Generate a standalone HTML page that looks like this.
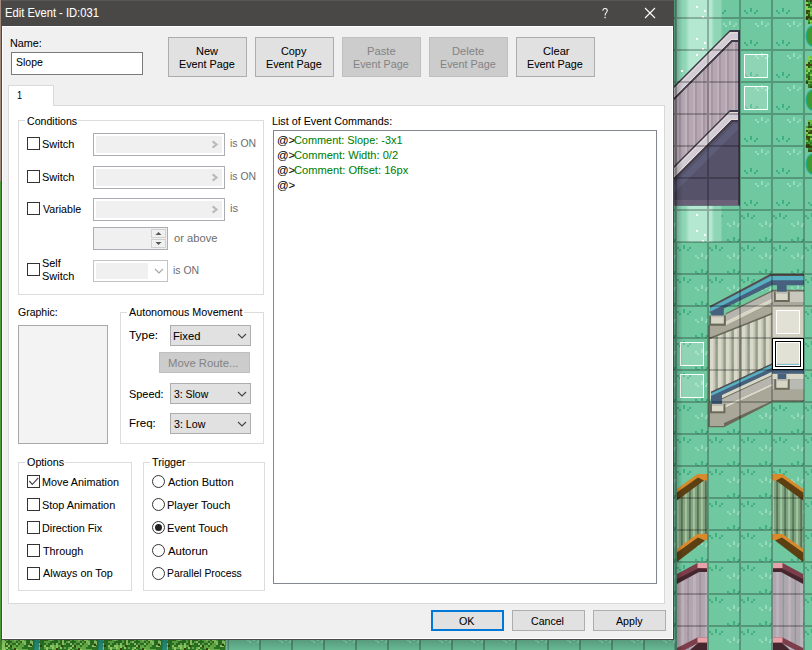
<!DOCTYPE html>
<html><head><meta charset="utf-8"><title>Edit Event</title>
<style>
html,body{margin:0;padding:0}
body{width:812px;height:650px;overflow:hidden;position:relative;background:#70c8a0;font-family:"Liberation Sans",sans-serif;}
.a{position:absolute;box-sizing:border-box}
.t{position:absolute;white-space:pre;line-height:14px;transform-origin:0 0;-webkit-text-stroke:0.05px currentColor}
.btn{background:#e1e1e1;border:1px solid #adadad}
.btd{background:#cccccc;border:1px solid #bfbfbf}
.grp{border:1px solid #dcdcdc}
.fld{background:#f0f0f0;border:1px solid #abadb3}
.fw{box-shadow:inset 0 0 0 2px #fff}
.ns{-webkit-text-stroke:0 !important}
.cb{width:13px;height:13px;background:#fff;border:1px solid #333}
.rb{width:13px;height:13px;background:#fff;border:1px solid #333;border-radius:50%}
.cmb{background:#e1e1e1;border:1px solid #adadad}
.gl{background:#fff;height:14px}
</style></head>
<body>
<svg class="a" style="left:0;top:0" width="812" height="650" viewBox="0 0 812 650"><defs><pattern id="fl" x="4" y="18" width="32" height="32" patternUnits="userSpaceOnUse"><rect x="0" y="0" width="32" height="32" fill="#70c8a0" /><rect x="1" y="5" width="2" height="2" fill="#3fae80" /><rect x="3" y="7" width="2" height="2" fill="#3fae80" /><rect x="7" y="3" width="2" height="2" fill="#3fae80" /><rect x="7" y="5" width="2" height="2" fill="#3fae80" /><rect x="11" y="7" width="2" height="2" fill="#3fae80" /><rect x="13" y="5" width="2" height="2" fill="#3fae80" /><rect x="19" y="13" width="2" height="2" fill="#98dcc0" /><rect x="21" y="15" width="2" height="2" fill="#98dcc0" /><rect x="25" y="11" width="2" height="2" fill="#98dcc0" /><rect x="25" y="13" width="2" height="2" fill="#98dcc0" /><rect x="29" y="15" width="2" height="2" fill="#98dcc0" /><rect x="30" y="13" width="2" height="2" fill="#98dcc0" /><rect x="19" y="29" width="2" height="2" fill="#3fae80" /><rect x="21" y="31" width="2" height="2" fill="#3fae80" /><rect x="25" y="27" width="2" height="2" fill="#3fae80" /><rect x="25" y="29" width="2" height="2" fill="#3fae80" /><rect x="29" y="31" width="2" height="2" fill="#3fae80" /><rect x="30" y="29" width="2" height="2" fill="#3fae80" /></pattern><pattern id="fa" x="4" y="18" width="32" height="32" patternUnits="userSpaceOnUse"><rect x="0" y="0" width="32" height="32" fill="#70c8a0" /><rect x="15" y="5" width="2" height="2" fill="#98dcc0" /><rect x="17" y="7" width="2" height="2" fill="#98dcc0" /><rect x="21" y="3" width="2" height="2" fill="#98dcc0" /><rect x="21" y="5" width="2" height="2" fill="#98dcc0" /><rect x="25" y="7" width="2" height="2" fill="#98dcc0" /><rect x="27" y="5" width="2" height="2" fill="#98dcc0" /><rect x="4" y="24" width="2" height="2" fill="#3fae80" /><rect x="6" y="26" width="2" height="2" fill="#3fae80" /><rect x="10" y="22" width="2" height="2" fill="#3fae80" /><rect x="10" y="24" width="2" height="2" fill="#3fae80" /><rect x="14" y="26" width="2" height="2" fill="#3fae80" /><rect x="16" y="24" width="2" height="2" fill="#3fae80" /></pattern><pattern id="gr" x="4" y="18" width="32" height="32" patternUnits="userSpaceOnUse"><rect x="0" y="0" width="0.9" height="32" fill="#000" /><rect x="31.1" y="0" width="0.9" height="32" fill="#000" /><rect x="0.9" y="0" width="30.2" height="0.9" fill="#000" /><rect x="0.9" y="31.1" width="30.2" height="0.9" fill="#000" /></pattern><linearGradient id="sh" x1="0" x2="1" y1="0" y2="0"><stop offset="0" stop-color="#000" stop-opacity="0.28"/><stop offset="1" stop-color="#000" stop-opacity="0"/></linearGradient><linearGradient id="lb" x1="0" x2="1" y1="0" y2="0"><stop offset="0" stop-color="#8fd8b8"/><stop offset="0.25" stop-color="#b4ead2"/><stop offset="0.55" stop-color="#bdeed8"/><stop offset="0.75" stop-color="#a6e2c6"/><stop offset="1" stop-color="#84d2b0"/></linearGradient><pattern id="bu" x="0" y="639" width="64" height="12" patternUnits="userSpaceOnUse"><rect x="0" y="0" width="64" height="12" fill="#4c9f38" /><rect x="0" y="0" width="2" height="2" fill="#2f8028" /><rect x="0" y="2" width="2" height="2" fill="#2f8028" /><rect x="0" y="4" width="2" height="2" fill="#6cbc4c" /><rect x="0" y="6" width="2" height="2" fill="#2f8028" /><rect x="0" y="8" width="2" height="2" fill="#6cbc4c" /><rect x="0" y="10" width="2" height="2" fill="#2f8028" /><rect x="2" y="0" width="2" height="2" fill="#2f8028" /><rect x="2" y="2" width="2" height="2" fill="#6cbc4c" /><rect x="2" y="4" width="2" height="2" fill="#2f8028" /><rect x="2" y="6" width="2" height="2" fill="#2f8028" /><rect x="2" y="8" width="2" height="2" fill="#2f8028" /><rect x="2" y="10" width="2" height="2" fill="#2f8028" /><rect x="4" y="0" width="2" height="2" fill="#2f8028" /><rect x="4" y="2" width="2" height="2" fill="#a0e070" /><rect x="4" y="4" width="2" height="2" fill="#2f8028" /><rect x="4" y="6" width="2" height="2" fill="#2f8028" /><rect x="4" y="8" width="2" height="2" fill="#6cbc4c" /><rect x="4" y="10" width="2" height="2" fill="#a0e070" /><rect x="6" y="0" width="2" height="2" fill="#6cbc4c" /><rect x="6" y="2" width="2" height="2" fill="#2f8028" /><rect x="6" y="4" width="2" height="2" fill="#a0e070" /><rect x="6" y="6" width="2" height="2" fill="#2f8028" /><rect x="6" y="8" width="2" height="2" fill="#a0e070" /><rect x="6" y="10" width="2" height="2" fill="#2f8028" /><rect x="8" y="0" width="2" height="2" fill="#2f8028" /><rect x="8" y="2" width="2" height="2" fill="#2f8028" /><rect x="8" y="4" width="2" height="2" fill="#2f8028" /><rect x="8" y="6" width="2" height="2" fill="#a0e070" /><rect x="8" y="8" width="2" height="2" fill="#2f8028" /><rect x="8" y="10" width="2" height="2" fill="#6cbc4c" /><rect x="10" y="0" width="2" height="2" fill="#6cbc4c" /><rect x="10" y="2" width="2" height="2" fill="#2f8028" /><rect x="10" y="4" width="2" height="2" fill="#6cbc4c" /><rect x="10" y="6" width="2" height="2" fill="#2f8028" /><rect x="10" y="8" width="2" height="2" fill="#2f8028" /><rect x="10" y="10" width="2" height="2" fill="#2f8028" /><rect x="12" y="0" width="2" height="2" fill="#6cbc4c" /><rect x="12" y="2" width="2" height="2" fill="#6cbc4c" /><rect x="12" y="4" width="2" height="2" fill="#2f8028" /><rect x="12" y="6" width="2" height="2" fill="#6cbc4c" /><rect x="12" y="8" width="2" height="2" fill="#6cbc4c" /><rect x="12" y="10" width="2" height="2" fill="#2f8028" /><rect x="14" y="0" width="2" height="2" fill="#a0e070" /><rect x="14" y="2" width="2" height="2" fill="#6cbc4c" /><rect x="14" y="4" width="2" height="2" fill="#2f8028" /><rect x="14" y="6" width="2" height="2" fill="#6cbc4c" /><rect x="14" y="8" width="2" height="2" fill="#6cbc4c" /><rect x="14" y="10" width="2" height="2" fill="#a0e070" /><rect x="16" y="0" width="2" height="2" fill="#6cbc4c" /><rect x="16" y="2" width="2" height="2" fill="#2f8028" /><rect x="16" y="4" width="2" height="2" fill="#a0e070" /><rect x="16" y="6" width="2" height="2" fill="#2f8028" /><rect x="16" y="8" width="2" height="2" fill="#6cbc4c" /><rect x="16" y="10" width="2" height="2" fill="#a0e070" /><rect x="18" y="0" width="2" height="2" fill="#2f8028" /><rect x="18" y="2" width="2" height="2" fill="#6cbc4c" /><rect x="18" y="4" width="2" height="2" fill="#2f8028" /><rect x="18" y="6" width="2" height="2" fill="#6cbc4c" /><rect x="18" y="8" width="2" height="2" fill="#6cbc4c" /><rect x="18" y="10" width="2" height="2" fill="#6cbc4c" /><rect x="20" y="0" width="2" height="2" fill="#a0e070" /><rect x="20" y="2" width="2" height="2" fill="#2f8028" /><rect x="20" y="4" width="2" height="2" fill="#6cbc4c" /><rect x="20" y="6" width="2" height="2" fill="#6cbc4c" /><rect x="20" y="8" width="2" height="2" fill="#6cbc4c" /><rect x="20" y="10" width="2" height="2" fill="#6cbc4c" /><rect x="22" y="0" width="2" height="2" fill="#a0e070" /><rect x="22" y="2" width="2" height="2" fill="#a0e070" /><rect x="22" y="4" width="2" height="2" fill="#6cbc4c" /><rect x="22" y="6" width="2" height="2" fill="#6cbc4c" /><rect x="22" y="8" width="2" height="2" fill="#2f8028" /><rect x="22" y="10" width="2" height="2" fill="#6cbc4c" /><rect x="24" y="0" width="2" height="2" fill="#6cbc4c" /><rect x="24" y="2" width="2" height="2" fill="#a0e070" /><rect x="24" y="4" width="2" height="2" fill="#a0e070" /><rect x="24" y="6" width="2" height="2" fill="#2f8028" /><rect x="24" y="8" width="2" height="2" fill="#2f8028" /><rect x="24" y="10" width="2" height="2" fill="#6cbc4c" /><rect x="26" y="0" width="2" height="2" fill="#2f8028" /><rect x="26" y="2" width="2" height="2" fill="#2f8028" /><rect x="26" y="4" width="2" height="2" fill="#2f8028" /><rect x="26" y="6" width="2" height="2" fill="#2f8028" /><rect x="26" y="8" width="2" height="2" fill="#2f8028" /><rect x="26" y="10" width="2" height="2" fill="#6cbc4c" /><rect x="28" y="0" width="2" height="2" fill="#2f8028" /><rect x="28" y="2" width="2" height="2" fill="#2f8028" /><rect x="28" y="4" width="2" height="2" fill="#2f8028" /><rect x="28" y="6" width="2" height="2" fill="#a0e070" /><rect x="28" y="8" width="2" height="2" fill="#2f8028" /><rect x="28" y="10" width="2" height="2" fill="#2f8028" /><rect x="30" y="0" width="2" height="2" fill="#6cbc4c" /><rect x="30" y="2" width="2" height="2" fill="#a0e070" /><rect x="30" y="4" width="2" height="2" fill="#6cbc4c" /><rect x="30" y="6" width="2" height="2" fill="#a0e070" /><rect x="30" y="8" width="2" height="2" fill="#2f8028" /><rect x="30" y="10" width="2" height="2" fill="#2f8028" /><rect x="32" y="0" width="2" height="2" fill="#2f8028" /><rect x="32" y="2" width="2" height="2" fill="#a0e070" /><rect x="32" y="4" width="2" height="2" fill="#a0e070" /><rect x="32" y="6" width="2" height="2" fill="#2f8028" /><rect x="32" y="8" width="2" height="2" fill="#2f8028" /><rect x="32" y="10" width="2" height="2" fill="#2f8028" /><rect x="34" y="0" width="2" height="2" fill="#2f8028" /><rect x="34" y="2" width="2" height="2" fill="#2f8028" /><rect x="34" y="4" width="2" height="2" fill="#6cbc4c" /><rect x="34" y="6" width="2" height="2" fill="#2f8028" /><rect x="34" y="8" width="2" height="2" fill="#2f8028" /><rect x="34" y="10" width="2" height="2" fill="#2f8028" /><rect x="36" y="0" width="2" height="2" fill="#2f8028" /><rect x="36" y="2" width="2" height="2" fill="#6cbc4c" /><rect x="36" y="4" width="2" height="2" fill="#a0e070" /><rect x="36" y="6" width="2" height="2" fill="#6cbc4c" /><rect x="36" y="8" width="2" height="2" fill="#6cbc4c" /><rect x="36" y="10" width="2" height="2" fill="#6cbc4c" /><rect x="38" y="0" width="2" height="2" fill="#6cbc4c" /><rect x="38" y="2" width="2" height="2" fill="#2f8028" /><rect x="38" y="4" width="2" height="2" fill="#a0e070" /><rect x="38" y="6" width="2" height="2" fill="#6cbc4c" /><rect x="38" y="8" width="2" height="2" fill="#a0e070" /><rect x="38" y="10" width="2" height="2" fill="#6cbc4c" /><rect x="40" y="0" width="2" height="2" fill="#2f8028" /><rect x="40" y="2" width="2" height="2" fill="#2f8028" /><rect x="40" y="4" width="2" height="2" fill="#2f8028" /><rect x="40" y="6" width="2" height="2" fill="#6cbc4c" /><rect x="40" y="8" width="2" height="2" fill="#2f8028" /><rect x="40" y="10" width="2" height="2" fill="#2f8028" /><rect x="42" y="0" width="2" height="2" fill="#2f8028" /><rect x="42" y="2" width="2" height="2" fill="#2f8028" /><rect x="42" y="4" width="2" height="2" fill="#2f8028" /><rect x="42" y="6" width="2" height="2" fill="#2f8028" /><rect x="42" y="8" width="2" height="2" fill="#2f8028" /><rect x="42" y="10" width="2" height="2" fill="#2f8028" /><rect x="44" y="0" width="2" height="2" fill="#2f8028" /><rect x="44" y="2" width="2" height="2" fill="#6cbc4c" /><rect x="44" y="4" width="2" height="2" fill="#2f8028" /><rect x="44" y="6" width="2" height="2" fill="#a0e070" /><rect x="44" y="8" width="2" height="2" fill="#6cbc4c" /><rect x="44" y="10" width="2" height="2" fill="#2f8028" /><rect x="46" y="0" width="2" height="2" fill="#2f8028" /><rect x="46" y="2" width="2" height="2" fill="#6cbc4c" /><rect x="46" y="4" width="2" height="2" fill="#6cbc4c" /><rect x="46" y="6" width="2" height="2" fill="#2f8028" /><rect x="46" y="8" width="2" height="2" fill="#a0e070" /><rect x="46" y="10" width="2" height="2" fill="#a0e070" /><rect x="48" y="0" width="2" height="2" fill="#6cbc4c" /><rect x="48" y="2" width="2" height="2" fill="#6cbc4c" /><rect x="48" y="4" width="2" height="2" fill="#2f8028" /><rect x="48" y="6" width="2" height="2" fill="#2f8028" /><rect x="48" y="8" width="2" height="2" fill="#6cbc4c" /><rect x="48" y="10" width="2" height="2" fill="#2f8028" /><rect x="50" y="0" width="2" height="2" fill="#a0e070" /><rect x="50" y="2" width="2" height="2" fill="#2f8028" /><rect x="50" y="4" width="2" height="2" fill="#2f8028" /><rect x="50" y="6" width="2" height="2" fill="#a0e070" /><rect x="50" y="8" width="2" height="2" fill="#6cbc4c" /><rect x="50" y="10" width="2" height="2" fill="#2f8028" /><rect x="52" y="0" width="2" height="2" fill="#6cbc4c" /><rect x="52" y="2" width="2" height="2" fill="#2f8028" /><rect x="52" y="4" width="2" height="2" fill="#6cbc4c" /><rect x="52" y="6" width="2" height="2" fill="#a0e070" /><rect x="52" y="8" width="2" height="2" fill="#a0e070" /><rect x="52" y="10" width="2" height="2" fill="#6cbc4c" /><rect x="54" y="0" width="2" height="2" fill="#2f8028" /><rect x="54" y="2" width="2" height="2" fill="#2f8028" /><rect x="54" y="4" width="2" height="2" fill="#2f8028" /><rect x="54" y="6" width="2" height="2" fill="#6cbc4c" /><rect x="54" y="8" width="2" height="2" fill="#6cbc4c" /><rect x="54" y="10" width="2" height="2" fill="#6cbc4c" /><rect x="56" y="0" width="2" height="2" fill="#2f8028" /><rect x="56" y="2" width="2" height="2" fill="#2f8028" /><rect x="56" y="4" width="2" height="2" fill="#a0e070" /><rect x="56" y="6" width="2" height="2" fill="#a0e070" /><rect x="56" y="8" width="2" height="2" fill="#a0e070" /><rect x="56" y="10" width="2" height="2" fill="#6cbc4c" /><rect x="58" y="0" width="2" height="2" fill="#6cbc4c" /><rect x="58" y="2" width="2" height="2" fill="#6cbc4c" /><rect x="58" y="4" width="2" height="2" fill="#2f8028" /><rect x="58" y="6" width="2" height="2" fill="#6cbc4c" /><rect x="58" y="8" width="2" height="2" fill="#2f8028" /><rect x="58" y="10" width="2" height="2" fill="#2f8028" /><rect x="60" y="0" width="2" height="2" fill="#2f8028" /><rect x="60" y="2" width="2" height="2" fill="#2f8028" /><rect x="60" y="4" width="2" height="2" fill="#2f8028" /><rect x="60" y="6" width="2" height="2" fill="#6cbc4c" /><rect x="60" y="8" width="2" height="2" fill="#a0e070" /><rect x="60" y="10" width="2" height="2" fill="#2f8028" /><rect x="62" y="0" width="2" height="2" fill="#a0e070" /><rect x="62" y="2" width="2" height="2" fill="#a0e070" /><rect x="62" y="4" width="2" height="2" fill="#a0e070" /><rect x="62" y="6" width="2" height="2" fill="#2f8028" /><rect x="62" y="8" width="2" height="2" fill="#2f8028" /><rect x="62" y="10" width="2" height="2" fill="#2f8028" /><rect x="34" y="0" width="5" height="12" fill="#2a9a80" /><rect x="33" y="0" width="1.5" height="12" fill="#1f7a66" /><rect x="10" y="6" width="2" height="2" fill="#3a4a12" /><rect x="30" y="5" width="2" height="2" fill="#3a4a12" /><rect x="40" y="6" width="2" height="2" fill="#3a4a12" /><rect x="61" y="6" width="2" height="2" fill="#3a4a12" /><rect x="14" y="9" width="2" height="2" fill="#3a4a12" /><rect x="56" y="9" width="2" height="2" fill="#3a4a12" /></pattern><linearGradient id="sv" x1="0" x2="0" y1="0" y2="1"><stop offset="0" stop-color="#000" stop-opacity="0.22"/><stop offset="1" stop-color="#000" stop-opacity="0.08"/></linearGradient></defs><rect x="0" y="0" width="812" height="650" fill="url(#fl)" /><rect x="674" y="0" width="138" height="210" fill="url(#fa)" /><rect x="676" y="0" width="45.5" height="120" fill="#8ed6b6" /><rect x="686.5" y="0" width="27" height="120" fill="#a2dfc4" /><rect x="688.5" y="0" width="23.5" height="120" fill="#b4e8d0" /><rect x="676" y="206" width="45.5" height="36" fill="#8ed6b6" /><rect x="686.5" y="206" width="27" height="36" fill="#a2dfc4" /><rect x="688.5" y="206" width="23.5" height="36" fill="#b4e8d0" /><rect x="696" y="6" width="2" height="2" fill="#fff" /><rect x="704" y="10" width="2" height="2" fill="#fff" /><rect x="702" y="16" width="2" height="2" fill="#fff" /><rect x="696" y="38" width="2" height="2" fill="#fff" /><rect x="704" y="42" width="2" height="2" fill="#fff" /><rect x="702" y="48" width="2" height="2" fill="#fff" /><rect x="696" y="54" width="2" height="2" fill="#fff" /><rect x="681" y="70" width="2" height="2" fill="#fff" /><rect x="696" y="230" width="2" height="2" fill="#fff" /><rect x="704" y="234" width="2" height="2" fill="#fff" /><rect x="702" y="240" width="2" height="2" fill="#fff" /><rect x="696" y="214" width="2" height="2" fill="#fff" /><clipPath id="c1"><polygon points="674.0,97.0 730.4,40.0 738.5,40.0 738.5,112.0 728.5,112.0 674.0,168.0" fill="#000" /></clipPath><g clip-path="url(#c1)"><rect x="673" y="38" width="4.05" height="132" fill="#b5a6b2" /><rect x="677" y="38" width="2.05" height="132" fill="#bfb2bc" /><rect x="679" y="38" width="2.05" height="132" fill="#a797a5" /><rect x="681" y="38" width="4.05" height="132" fill="#b5a6b2" /><rect x="685" y="38" width="2.05" height="132" fill="#bfb2bc" /><rect x="687" y="38" width="2.05" height="132" fill="#a797a5" /><rect x="689" y="38" width="4.05" height="132" fill="#b5a6b2" /><rect x="693" y="38" width="2.05" height="132" fill="#bfb2bc" /><rect x="695" y="38" width="2.05" height="132" fill="#a797a5" /><rect x="697" y="38" width="4.05" height="132" fill="#b5a6b2" /><rect x="701" y="38" width="2.05" height="132" fill="#bfb2bc" /><rect x="703" y="38" width="2.05" height="132" fill="#a797a5" /><rect x="705" y="38" width="4.05" height="132" fill="#b5a6b2" /><rect x="709" y="38" width="2.05" height="132" fill="#bfb2bc" /><rect x="711" y="38" width="2.05" height="132" fill="#a797a5" /><rect x="713" y="38" width="4.05" height="132" fill="#b5a6b2" /><rect x="717" y="38" width="2.05" height="132" fill="#bfb2bc" /><rect x="719" y="38" width="2.05" height="132" fill="#a797a5" /><rect x="721" y="38" width="4.05" height="132" fill="#b5a6b2" /><rect x="725" y="38" width="2.05" height="132" fill="#bfb2bc" /><rect x="727" y="38" width="2.05" height="132" fill="#a797a5" /><rect x="729" y="38" width="4.05" height="132" fill="#b5a6b2" /><rect x="733" y="38" width="2.05" height="132" fill="#bfb2bc" /><rect x="735" y="38" width="2.05" height="132" fill="#a797a5" /><rect x="737" y="38" width="2.05" height="132" fill="#b5a6b2" /></g><polygon points="674.0,178.0 732.0,120.0 738.5,120.0 738.5,205.5 674.0,205.5" fill="#555269" /><polygon points="674.0,184.0 734.0,124.0 738.2,124.0 738.2,129.0 674.0,193.0" fill="#5d5d7a" /><rect x="674" y="200" width="65" height="5.5" fill="#6a6078" /><polygon points="674.0,86.0 729.9,30.1 739.9,30.1 739.9,42.0 732.3,42.0 674.0,100.3" fill="#3f394c" /><polygon points="674.0,88.2 730.1,32.1 738.2,32.1 738.2,40.1 731.3,40.1 674.0,97.4" fill="#d2ccd8" /><polygon points="674.0,88.2 730.1,32.1 738.2,32.1 738.2,33.3 730.6,33.3 674.0,89.9" fill="#e6dcd0" /><polygon points="674.0,95.9 730.8,39.1 738.2,39.1 738.2,40.1 731.3,40.1 674.0,97.4" fill="#e6dcd0" /><polygon points="674.0,166.0 729.9,110.1 739.9,110.1 739.9,122.0 732.3,122.0 674.0,180.3" fill="#3f394c" /><polygon points="674.0,168.2 730.1,112.1 738.2,112.1 738.2,120.1 731.3,120.1 674.0,177.4" fill="#d2ccd8" /><polygon points="674.0,168.2 730.1,112.1 738.2,112.1 738.2,113.3 730.6,113.3 674.0,169.9" fill="#e6dcd0" /><polygon points="674.0,175.9 730.8,119.1 738.2,119.1 738.2,120.1 731.3,120.1 674.0,177.4" fill="#e6dcd0" /><rect x="738" y="31" width="2" height="174.5" fill="#3f394c" /><clipPath id="c2"><polygon points="708.7,338.0 772.0,313.0 772.0,372.0 708.7,400.0" fill="#000" /></clipPath><g clip-path="url(#c2)"><rect x="708.7" y="310" width="1.05" height="92" fill="#7f7e6e" /><rect x="709.7" y="310" width="4.05" height="92" fill="#dad9c9" /><rect x="713.7" y="310" width="1.65" height="92" fill="#c6c5b5" /><rect x="715.3" y="310" width="1.45" height="92" fill="#aaa999" /><rect x="716.7" y="310" width="1.05" height="92" fill="#7f7e6e" /><rect x="717.7" y="310" width="4.05" height="92" fill="#dad9c9" /><rect x="721.7" y="310" width="1.65" height="92" fill="#c6c5b5" /><rect x="723.3" y="310" width="1.45" height="92" fill="#aaa999" /><rect x="724.7" y="310" width="1.05" height="92" fill="#7f7e6e" /><rect x="725.7" y="310" width="4.05" height="92" fill="#dad9c9" /><rect x="729.7" y="310" width="1.65" height="92" fill="#c6c5b5" /><rect x="731.3" y="310" width="1.45" height="92" fill="#aaa999" /><rect x="732.7" y="310" width="1.05" height="92" fill="#7f7e6e" /><rect x="733.7" y="310" width="4.05" height="92" fill="#dad9c9" /><rect x="737.7" y="310" width="1.65" height="92" fill="#c6c5b5" /><rect x="739.3" y="310" width="1.45" height="92" fill="#aaa999" /><rect x="740.7" y="310" width="1.05" height="92" fill="#7f7e6e" /><rect x="741.7" y="310" width="4.05" height="92" fill="#dad9c9" /><rect x="745.7" y="310" width="1.65" height="92" fill="#c6c5b5" /><rect x="747.3" y="310" width="1.45" height="92" fill="#aaa999" /><rect x="748.7" y="310" width="1.05" height="92" fill="#7f7e6e" /><rect x="749.7" y="310" width="4.05" height="92" fill="#dad9c9" /><rect x="753.7" y="310" width="1.65" height="92" fill="#c6c5b5" /><rect x="755.3" y="310" width="1.45" height="92" fill="#aaa999" /><rect x="756.7" y="310" width="1.05" height="92" fill="#7f7e6e" /><rect x="757.7" y="310" width="4.05" height="92" fill="#dad9c9" /><rect x="761.7" y="310" width="1.65" height="92" fill="#c6c5b5" /><rect x="763.3" y="310" width="1.45" height="92" fill="#aaa999" /><rect x="764.7" y="310" width="1.05" height="92" fill="#7f7e6e" /><rect x="765.7" y="310" width="4.05" height="92" fill="#dad9c9" /><rect x="769.7" y="310" width="1.65" height="92" fill="#c6c5b5" /><rect x="771.3" y="310" width="0.75" height="92" fill="#aaa999" /></g><polygon points="709.1,325.0 725.8,325.0 725.8,313.2 772.0,290.4 772.0,314.6 709.1,339.6" fill="#6b6a5a" /><polygon points="709.1,325.6 725.8,325.6 725.8,325.4 772.0,302.6 772.0,312.8 709.1,337.8" fill="#a9a898" /><polygon points="725.8,314.5 772.0,291.7 772.0,298.1 725.8,320.9" fill="#b6b6ae" /><polygon points="725.8,320.9 772.0,298.1 772.0,302.6 725.8,325.4" fill="#d8d7c7" /><polygon points="708.7,404.0 724.0,396.0 772.0,373.5 772.0,402.6 724.0,427.3 708.7,427.3" fill="#6b6a5a" /><polygon points="722.0,394.7 772.0,371.6 772.0,375.1 722.0,398.2" fill="#d8d7c7" /><polygon points="722.0,399.2 772.0,376.1 772.0,383.5 722.0,406.6" fill="#b6b6ae" /><polygon points="722.0,406.6 772.0,383.5 772.0,386.3 722.0,409.4" fill="#d8d7c7" /><polygon points="722.0,409.4 772.0,386.3 772.0,400.9 722.0,424.0" fill="#a9a898" /><rect x="710" y="413" width="14" height="13" fill="#a9a898" /><rect x="708.4" y="325" width="1.6" height="102" fill="#6b6a5a" /><rect x="772" y="289.8" width="32" height="48.5" fill="#6b6a5a" /><rect x="772" y="291.5" width="32" height="10.5" fill="#c8c8bc" /><rect x="772" y="302" width="32" height="4" fill="#a9a99d" /><rect x="772" y="306" width="32" height="32.5" fill="#d0cfc0" /><rect x="777" y="311" width="22" height="22" fill="#dad9ca" /><rect x="772" y="338" width="32" height="63.6" fill="#6b6a5a" /><rect x="772" y="338" width="32" height="32" fill="#d0cfc0" /><rect x="777" y="343" width="22" height="20" fill="#dad9ca" /><rect x="777" y="364" width="22" height="1.6" fill="#56b0c1" /><rect x="772" y="369.8" width="32" height="4" fill="#46607e" /><rect x="772" y="373.8" width="32" height="5.3" fill="#d8d7c7" /><rect x="772" y="379.1" width="32" height="10.7" fill="#babab4" /><rect x="772" y="389.8" width="32" height="10.4" fill="#a9a898" /><rect x="773.8" y="291.7" width="16" height="10.3" fill="#6b6a5a" /><rect x="775.8" y="291.7" width="12" height="8.3" fill="#d8d7c7" /><rect x="775.8" y="291.7" width="12" height="2" fill="#bdbcae" /><rect x="709.1" y="315.4" width="16.7" height="10.2" fill="#6b6a5a" /><rect x="711.1" y="315.4" width="12.7" height="8.2" fill="#d8d7c7" /><rect x="711.1" y="315.4" width="12.7" height="2" fill="#bdbcae" /><rect x="774.3" y="379.1" width="15.4" height="10.7" fill="#6b6a5a" /><rect x="776.3" y="379.1" width="11.4" height="8.7" fill="#d8d7c7" /><rect x="776.3" y="379.1" width="11.4" height="2" fill="#bdbcae" /><rect x="710" y="403.9" width="15.4" height="9.4" fill="#6b6a5a" /><rect x="712" y="403.9" width="11.4" height="7.4" fill="#d8d7c7" /><rect x="712" y="403.9" width="11.4" height="2" fill="#bdbcae" /><polygon points="710.4,305.7 770.6,276.0 804.0,273.8 804.0,285.3 771.5,285.3 723.8,308.6 723.8,315.4 711.7,315.4 710.4,313.0" fill="#46607e" /><polygon points="710.4,305.7 770.6,273.8 804.0,273.8 804.0,276.0 771.0,276.0 710.4,307.9" fill="#55504c" /><polygon points="710.4,307.7 771.0,276.0 804.0,276.0 804.0,280.2 771.5,280.2 710.4,311.7" fill="#56b0c1" /><rect x="777" y="285" width="9.6" height="6.7" fill="#46607e" /><polygon points="711.0,391.7 772.0,363.5 772.0,371.8 722.0,394.9 722.0,403.9 712.0,403.9 711.0,401.0" fill="#46607e" /><polygon points="711.0,391.7 772.0,363.5 772.0,365.1 711.0,393.3" fill="#55504c" /><polygon points="711.0,393.2 772.0,365.0 772.0,367.7 711.0,395.9" fill="#56b0c1" /><rect x="777.6" y="373.8" width="8.7" height="5.3" fill="#46607e" /><clipPath id="cbo"><polygon points="676.9,494.0 697.5,480.0 707.8,480.0 707.8,540.0 697.5,540.0 676.9,555.0" fill="#000" /></clipPath><g clip-path="url(#cbo)"><rect x="676.9" y="478" width="2" height="80" fill="#a9c29b" /><rect x="678.9" y="478" width="2" height="80" fill="#86a07c" /><rect x="680.9" y="478" width="2" height="80" fill="#5d7358" /><rect x="682.9" y="478" width="2" height="80" fill="#86a07c" /><rect x="684.9" y="478" width="2" height="80" fill="#a9c29b" /><rect x="686.9" y="478" width="2" height="80" fill="#86a07c" /><rect x="688.9" y="478" width="2" height="80" fill="#5d7358" /><rect x="690.9" y="478" width="2" height="80" fill="#86a07c" /><rect x="692.9" y="478" width="2" height="80" fill="#a9c29b" /><rect x="694.9" y="478" width="2" height="80" fill="#86a07c" /><rect x="696.9" y="478" width="2" height="80" fill="#5d7358" /><rect x="698.9" y="478" width="2" height="80" fill="#86a07c" /><rect x="700.9" y="478" width="2" height="80" fill="#a9c29b" /><rect x="702.9" y="478" width="2" height="80" fill="#86a07c" /><rect x="704.9" y="478" width="2" height="80" fill="#5d7358" /><rect x="706.9" y="478" width="0.8999999999999773" height="80" fill="#86a07c" /></g><polygon points="676.9,489.0 697.5,474.0 707.8,474.0 707.8,480.5 699.0,480.5 676.9,496.5" fill="#d98a2b" /><polygon points="676.9,492.5 698.0,477.5 704.0,480.5 676.9,500.5" fill="#5c4012" /><polygon points="676.9,549.0 697.5,534.0 707.8,534.0 707.8,540.0 699.0,540.0 676.9,556.0" fill="#d98a2b" /><polygon points="676.9,552.5 698.0,537.5 705.0,540.5 676.9,562.0" fill="#5c4012" /><clipPath id="cbom"><polygon points="803.1,494.0 782.5,480.0 772.2,480.0 772.2,540.0 782.5,540.0 803.1,555.0" fill="#000" /></clipPath><g clip-path="url(#cbom)"><rect x="772.2" y="478" width="2" height="80" fill="#a9c29b" /><rect x="774.2" y="478" width="2" height="80" fill="#86a07c" /><rect x="776.2" y="478" width="2" height="80" fill="#5d7358" /><rect x="778.2" y="478" width="2" height="80" fill="#86a07c" /><rect x="780.2" y="478" width="2" height="80" fill="#a9c29b" /><rect x="782.2" y="478" width="2" height="80" fill="#86a07c" /><rect x="784.2" y="478" width="2" height="80" fill="#5d7358" /><rect x="786.2" y="478" width="2" height="80" fill="#86a07c" /><rect x="788.2" y="478" width="2" height="80" fill="#a9c29b" /><rect x="790.2" y="478" width="2" height="80" fill="#86a07c" /><rect x="792.2" y="478" width="2" height="80" fill="#5d7358" /><rect x="794.2" y="478" width="2" height="80" fill="#86a07c" /><rect x="796.2" y="478" width="2" height="80" fill="#a9c29b" /><rect x="798.2" y="478" width="2" height="80" fill="#86a07c" /><rect x="800.2" y="478" width="2" height="80" fill="#5d7358" /><rect x="802.2" y="478" width="0.8999999999999773" height="80" fill="#86a07c" /></g><polygon points="803.1,489.0 782.5,474.0 772.2,474.0 772.2,480.5 781.0,480.5 803.1,496.5" fill="#d98a2b" /><polygon points="803.1,492.5 782.0,477.5 776.0,480.5 803.1,500.5" fill="#5c4012" /><polygon points="803.1,549.0 782.5,534.0 772.2,534.0 772.2,540.0 781.0,540.0 803.1,556.0" fill="#d98a2b" /><polygon points="803.1,552.5 782.0,537.5 775.0,540.5 803.1,562.0" fill="#5c4012" /><clipPath id="cbp"><polygon points="676.9,580.0 697.5,569.0 707.8,569.0 707.8,650.0 676.9,650.0" fill="#000" /></clipPath><g clip-path="url(#cbp)"><rect x="676.9" y="565" width="4.05" height="85" fill="#b3a4b0" /><rect x="680.9" y="565" width="3.05" height="85" fill="#c0b2bd" /><rect x="683.9" y="565" width="3.55" height="85" fill="#b3a4b0" /><rect x="687.4" y="565" width="1.55" height="85" fill="#9f909d" /><rect x="688.9" y="565" width="4.05" height="85" fill="#b3a4b0" /><rect x="692.9" y="565" width="3.05" height="85" fill="#c0b2bd" /><rect x="695.9" y="565" width="3.55" height="85" fill="#b3a4b0" /><rect x="699.4" y="565" width="1.55" height="85" fill="#9f909d" /><rect x="700.9" y="565" width="4.05" height="85" fill="#b3a4b0" /><rect x="704.9" y="565" width="2.95" height="85" fill="#c0b2bd" /></g><polygon points="676.9,574.0 697.5,563.0 707.0,563.0 707.0,569.0 698.0,569.0 676.9,580.0" fill="#7c3e4a" /><polygon points="697.5,563.0 707.0,563.0 707.0,568.0 697.5,568.0" fill="#e8a2aa" /><polygon points="676.9,579.0 698.0,568.5 707.0,569.0 707.0,572.0 699.0,572.0 676.9,584.0" fill="#45262e" /><polygon points="676.9,648.0 697.5,637.5 707.0,637.5 707.0,643.0 698.0,643.0 676.9,654.0" fill="#7c3e4a" /><polygon points="697.5,637.5 707.0,637.5 707.0,642.5 697.5,642.5" fill="#e8a2aa" /><polygon points="690.0,650.0 698.0,643.0 707.0,643.0 707.0,650.0" fill="#45262e" /><clipPath id="cbpm"><polygon points="803.1,580.0 782.5,569.0 772.2,569.0 772.2,650.0 803.1,650.0" fill="#000" /></clipPath><g clip-path="url(#cbpm)"><rect x="772.2" y="565" width="4.05" height="85" fill="#b3a4b0" /><rect x="776.2" y="565" width="3.05" height="85" fill="#c0b2bd" /><rect x="779.2" y="565" width="3.55" height="85" fill="#b3a4b0" /><rect x="782.7" y="565" width="1.55" height="85" fill="#9f909d" /><rect x="784.2" y="565" width="4.05" height="85" fill="#b3a4b0" /><rect x="788.2" y="565" width="3.05" height="85" fill="#c0b2bd" /><rect x="791.2" y="565" width="3.55" height="85" fill="#b3a4b0" /><rect x="794.7" y="565" width="1.55" height="85" fill="#9f909d" /><rect x="796.2" y="565" width="4.05" height="85" fill="#b3a4b0" /><rect x="800.2" y="565" width="2.95" height="85" fill="#c0b2bd" /></g><polygon points="803.1,574.0 782.5,563.0 773.0,563.0 773.0,569.0 782.0,569.0 803.1,580.0" fill="#7c3e4a" /><polygon points="782.5,563.0 773.0,563.0 773.0,568.0 782.5,568.0" fill="#e8a2aa" /><polygon points="803.1,579.0 782.0,568.5 773.0,569.0 773.0,572.0 781.0,572.0 803.1,584.0" fill="#45262e" /><polygon points="803.1,648.0 782.5,637.5 773.0,637.5 773.0,643.0 782.0,643.0 803.1,654.0" fill="#7c3e4a" /><polygon points="782.5,637.5 773.0,637.5 773.0,642.5 782.5,642.5" fill="#e8a2aa" /><polygon points="790.0,650.0 782.0,643.0 773.0,643.0 773.0,650.0" fill="#45262e" /><rect x="808" y="-8" width="2" height="2" fill="#3a4a10" /><rect x="810" y="-8" width="2" height="2" fill="#2f7a28" /><rect x="808" y="-6" width="2" height="2" fill="#2f7a28" /><rect x="810" y="-6" width="2" height="2" fill="#3a4a10" /><rect x="808" y="-4" width="2" height="2" fill="#3f9a30" /><rect x="810" y="-4" width="2" height="2" fill="#2f7a28" /><rect x="806" y="-2" width="2" height="2" fill="#8ad050" /><rect x="808" y="-2" width="2" height="2" fill="#6cbc4c" /><rect x="810" y="-2" width="2" height="2" fill="#2f7a28" /><rect x="806" y="0" width="2" height="2" fill="#3a4a10" /><rect x="808" y="0" width="2" height="2" fill="#2f7a28" /><rect x="810" y="0" width="2" height="2" fill="#3a4a10" /><rect x="806" y="2" width="2" height="2" fill="#8ad050" /><rect x="808" y="2" width="2" height="2" fill="#3f9a30" /><rect x="810" y="2" width="2" height="2" fill="#2f7a28" /><rect x="806" y="4" width="2" height="2" fill="#3a4a10" /><rect x="808" y="4" width="2" height="2" fill="#3a4a10" /><rect x="810" y="4" width="2" height="2" fill="#6cbc4c" /><rect x="806" y="6" width="2" height="2" fill="#8ad050" /><rect x="808" y="6" width="2" height="2" fill="#2f7a28" /><rect x="810" y="6" width="2" height="2" fill="#2f7a28" /><rect x="806" y="8" width="2" height="2" fill="#8ad050" /><rect x="808" y="8" width="2" height="2" fill="#8ad050" /><rect x="810" y="8" width="2" height="2" fill="#6cbc4c" /><rect x="806" y="10" width="2" height="2" fill="#3a4a10" /><rect x="808" y="10" width="2" height="2" fill="#3a4a10" /><rect x="810" y="10" width="2" height="2" fill="#6cbc4c" /><rect x="806" y="12" width="2" height="2" fill="#3a4a10" /><rect x="808" y="12" width="2" height="2" fill="#2f7a28" /><rect x="810" y="12" width="2" height="2" fill="#8ad050" /><rect x="806" y="14" width="2" height="2" fill="#6cbc4c" /><rect x="808" y="14" width="2" height="2" fill="#3a4a10" /><rect x="810" y="14" width="2" height="2" fill="#6cbc4c" /><rect x="806" y="16" width="2" height="2" fill="#3a4a10" /><rect x="808" y="16" width="2" height="2" fill="#3a4a10" /><rect x="810" y="16" width="2" height="2" fill="#2f7a28" /><rect x="806" y="18" width="2" height="2" fill="#3a4a10" /><rect x="808" y="18" width="2" height="2" fill="#3f9a30" /><rect x="810" y="18" width="2" height="2" fill="#3a4a10" /><rect x="808" y="20" width="2" height="2" fill="#3f9a30" /><rect x="810" y="20" width="2" height="2" fill="#8ad050" /><rect x="808" y="22" width="2" height="2" fill="#2f7a28" /><rect x="810" y="22" width="2" height="2" fill="#6cbc4c" /><ellipse cx="813" cy="36" rx="7.5" ry="10.5" fill="#22a888"/><ellipse cx="813.5" cy="36" rx="6.5" ry="9.5" fill="#3f9a32"/><rect x="808" y="56" width="2" height="2" fill="#8ad050" /><rect x="810" y="56" width="2" height="2" fill="#6cbc4c" /><rect x="808" y="58" width="2" height="2" fill="#8ad050" /><rect x="810" y="58" width="2" height="2" fill="#8ad050" /><rect x="808" y="60" width="2" height="2" fill="#6cbc4c" /><rect x="810" y="60" width="2" height="2" fill="#2f7a28" /><rect x="806" y="62" width="2" height="2" fill="#8ad050" /><rect x="808" y="62" width="2" height="2" fill="#3a4a10" /><rect x="810" y="62" width="2" height="2" fill="#3f9a30" /><rect x="806" y="64" width="2" height="2" fill="#3a4a10" /><rect x="808" y="64" width="2" height="2" fill="#3a4a10" /><rect x="810" y="64" width="2" height="2" fill="#3a4a10" /><rect x="806" y="66" width="2" height="2" fill="#8ad050" /><rect x="808" y="66" width="2" height="2" fill="#3a4a10" /><rect x="810" y="66" width="2" height="2" fill="#3f9a30" /><rect x="806" y="68" width="2" height="2" fill="#6cbc4c" /><rect x="808" y="68" width="2" height="2" fill="#8ad050" /><rect x="810" y="68" width="2" height="2" fill="#6cbc4c" /><rect x="806" y="70" width="2" height="2" fill="#3f9a30" /><rect x="808" y="70" width="2" height="2" fill="#8ad050" /><rect x="810" y="70" width="2" height="2" fill="#2f7a28" /><rect x="806" y="72" width="2" height="2" fill="#8ad050" /><rect x="808" y="72" width="2" height="2" fill="#2f7a28" /><rect x="810" y="72" width="2" height="2" fill="#3f9a30" /><rect x="806" y="74" width="2" height="2" fill="#2f7a28" /><rect x="808" y="74" width="2" height="2" fill="#2f7a28" /><rect x="810" y="74" width="2" height="2" fill="#8ad050" /><rect x="806" y="76" width="2" height="2" fill="#2f7a28" /><rect x="808" y="76" width="2" height="2" fill="#3a4a10" /><rect x="810" y="76" width="2" height="2" fill="#3f9a30" /><rect x="806" y="78" width="2" height="2" fill="#6cbc4c" /><rect x="808" y="78" width="2" height="2" fill="#3a4a10" /><rect x="810" y="78" width="2" height="2" fill="#3f9a30" /><rect x="806" y="80" width="2" height="2" fill="#2f7a28" /><rect x="808" y="80" width="2" height="2" fill="#6cbc4c" /><rect x="810" y="80" width="2" height="2" fill="#6cbc4c" /><rect x="806" y="82" width="2" height="2" fill="#3a4a10" /><rect x="808" y="82" width="2" height="2" fill="#6cbc4c" /><rect x="810" y="82" width="2" height="2" fill="#3f9a30" /><rect x="808" y="84" width="2" height="2" fill="#2f7a28" /><rect x="810" y="84" width="2" height="2" fill="#2f7a28" /><rect x="808" y="86" width="2" height="2" fill="#2f7a28" /><rect x="810" y="86" width="2" height="2" fill="#3a4a10" /><ellipse cx="813" cy="100" rx="7.5" ry="10.5" fill="#22a888"/><ellipse cx="813.5" cy="100" rx="6.5" ry="9.5" fill="#3f9a32"/><rect x="808" y="120" width="2" height="2" fill="#6cbc4c" /><rect x="810" y="120" width="2" height="2" fill="#6cbc4c" /><rect x="808" y="122" width="2" height="2" fill="#3a4a10" /><rect x="810" y="122" width="2" height="2" fill="#6cbc4c" /><rect x="808" y="124" width="2" height="2" fill="#2f7a28" /><rect x="810" y="124" width="2" height="2" fill="#3f9a30" /><rect x="806" y="126" width="2" height="2" fill="#3f9a30" /><rect x="808" y="126" width="2" height="2" fill="#3a4a10" /><rect x="810" y="126" width="2" height="2" fill="#3a4a10" /><rect x="806" y="128" width="2" height="2" fill="#8ad050" /><rect x="808" y="128" width="2" height="2" fill="#6cbc4c" /><rect x="810" y="128" width="2" height="2" fill="#8ad050" /><rect x="806" y="130" width="2" height="2" fill="#3a4a10" /><rect x="808" y="130" width="2" height="2" fill="#3f9a30" /><rect x="810" y="130" width="2" height="2" fill="#3a4a10" /><rect x="806" y="132" width="2" height="2" fill="#8ad050" /><rect x="808" y="132" width="2" height="2" fill="#3a4a10" /><rect x="810" y="132" width="2" height="2" fill="#3a4a10" /><rect x="806" y="134" width="2" height="2" fill="#3f9a30" /><rect x="808" y="134" width="2" height="2" fill="#8ad050" /><rect x="810" y="134" width="2" height="2" fill="#8ad050" /><rect x="806" y="136" width="2" height="2" fill="#3a4a10" /><rect x="808" y="136" width="2" height="2" fill="#3a4a10" /><rect x="810" y="136" width="2" height="2" fill="#2f7a28" /><rect x="806" y="138" width="2" height="2" fill="#2f7a28" /><rect x="808" y="138" width="2" height="2" fill="#3a4a10" /><rect x="810" y="138" width="2" height="2" fill="#8ad050" /><rect x="806" y="140" width="2" height="2" fill="#6cbc4c" /><rect x="808" y="140" width="2" height="2" fill="#2f7a28" /><rect x="810" y="140" width="2" height="2" fill="#3f9a30" /><rect x="806" y="142" width="2" height="2" fill="#2f7a28" /><rect x="808" y="142" width="2" height="2" fill="#3f9a30" /><rect x="810" y="142" width="2" height="2" fill="#2f7a28" /><rect x="806" y="144" width="2" height="2" fill="#3a4a10" /><rect x="808" y="144" width="2" height="2" fill="#3a4a10" /><rect x="810" y="144" width="2" height="2" fill="#3f9a30" /><rect x="806" y="146" width="2" height="2" fill="#3a4a10" /><rect x="808" y="146" width="2" height="2" fill="#3a4a10" /><rect x="810" y="146" width="2" height="2" fill="#3a4a10" /><rect x="808" y="148" width="2" height="2" fill="#2f7a28" /><rect x="810" y="148" width="2" height="2" fill="#2f7a28" /><rect x="808" y="150" width="2" height="2" fill="#3a4a10" /><rect x="810" y="150" width="2" height="2" fill="#3a4a10" /><ellipse cx="813" cy="164" rx="7.5" ry="10.5" fill="#22a888"/><ellipse cx="813.5" cy="164" rx="6.5" ry="9.5" fill="#3f9a32"/><rect x="0" y="0" width="812" height="650" fill="url(#gr)" opacity="0.27"/><rect x="0" y="639" width="227" height="11" fill="url(#bu)" /><rect x="0" y="639" width="5" height="11" fill="#9ede6e" /><rect x="225.5" y="639" width="2" height="11" fill="#84ccb2" /><rect x="0" y="181" width="2" height="470" fill="#4c9a36" /><rect x="0" y="0" width="2" height="181" fill="#a48a7c" /><rect x="744.5" y="54.5" width="23" height="23" fill="rgba(255,255,255,0.22)" stroke="#fff" stroke-width="1"/><rect x="744.5" y="86.5" width="23" height="23" fill="rgba(255,255,255,0.22)" stroke="#fff" stroke-width="1"/><rect x="776.5" y="310.5" width="23" height="23" fill="rgba(255,255,255,0.22)" stroke="#fff" stroke-width="1"/><rect x="776.5" y="342.5" width="23" height="23" fill="rgba(255,255,255,0.22)" stroke="#fff" stroke-width="1"/><rect x="680.5" y="342.5" width="23" height="23" fill="rgba(255,255,255,0.22)" stroke="#fff" stroke-width="1"/><rect x="680.5" y="374.5" width="23" height="23" fill="rgba(255,255,255,0.22)" stroke="#fff" stroke-width="1"/><rect x="772.5" y="338.5" width="31" height="31" fill="none" stroke="#000" stroke-width="1"/><rect x="774" y="340" width="28" height="28" fill="none" stroke="#fff" stroke-width="2"/><rect x="775.5" y="341.5" width="25" height="25" fill="none" stroke="#000" stroke-width="1"/><rect x="674" y="0" width="9" height="650" fill="url(#sh)" /><rect x="0" y="640" width="674" height="10" fill="url(#sv)" /></svg>
<div class="a " style="left:1px;top:0px;width:673px;height:640px;background:#4a4846"></div>
<div class="a " style="left:1px;top:0px;width:673px;height:1px;background:#5a5856"></div>
<div class="a " style="left:2px;top:26px;width:671px;height:613px;background:#f0f0f0;border:1px solid #fff"></div>
<svg class="a" style="left:643px;top:6px" width="14" height="14" viewBox="0 0 14 14"><path d="M2 2 L12 12 M12 2 L2 12" stroke="#fff" stroke-width="1.1" fill="none"/></svg>
<svg class="a" style="left:600px;top:6px" width="10" height="14" viewBox="0 0 10 14"><path d="M2.9 4.7 C2.9 3.2 3.9 2.4 5.1 2.4 C6.4 2.4 7.3 3.3 7.3 4.5 C7.3 6.4 5.1 6.7 5.1 9.4" fill="none" stroke="#fff" stroke-width="1.05"/><rect x="4.5" y="10.8" width="1.2" height="1.4" fill="#fff"/></svg>
<div class="a " style="left:11px;top:52px;width:132px;height:23px;background:#fff;border:1px solid #7a7a7a"></div>
<div class="a btn" style="left:168px;top:37px;width:79px;height:40px;"></div>
<div class="a btn" style="left:255px;top:37px;width:79px;height:40px;"></div>
<div class="a btd" style="left:342px;top:37px;width:79px;height:40px;"></div>
<div class="a btd" style="left:429px;top:37px;width:79px;height:40px;"></div>
<div class="a btn" style="left:516px;top:37px;width:79px;height:40px;"></div>
<div class="a " style="left:8px;top:105px;width:657px;height:499px;background:#fff;border:1px solid #d9d9d9"></div>
<div class="a " style="left:8px;top:85px;width:46px;height:21px;background:#fff;border:1px solid #d9d9d9;border-bottom:none"></div>
<div class="a grp" style="left:18px;top:120px;width:246px;height:175px;"></div>
<div class="a grp" style="left:120px;top:312px;width:144px;height:132px;"></div>
<div class="a grp" style="left:18px;top:462px;width:114px;height:129px;"></div>
<div class="a grp" style="left:143px;top:462px;width:122px;height:129px;"></div>
<div class="a gl" style="left:25px;top:113px;width:53px;height:14px;"></div>
<div class="a gl" style="left:127px;top:305px;width:117px;height:14px;"></div>
<div class="a gl" style="left:25px;top:455px;width:40px;height:14px;"></div>
<div class="a gl" style="left:150px;top:455px;width:37px;height:14px;"></div>
<div class="a fld fw" style="left:93px;top:133px;width:132px;height:23px;"></div>
<svg class="a" style="left:211px;top:140px" width="8" height="9" viewBox="0 0 8 9"><path d="M1.6 1.4 L5.6 4.5 L1.6 7.6" fill="none" stroke="#b8b8b8" stroke-width="2"/></svg>
<div class="a fld fw" style="left:93px;top:166px;width:132px;height:23px;"></div>
<svg class="a" style="left:211px;top:173px" width="8" height="9" viewBox="0 0 8 9"><path d="M1.6 1.4 L5.6 4.5 L1.6 7.6" fill="none" stroke="#b8b8b8" stroke-width="2"/></svg>
<div class="a fld fw" style="left:93px;top:198px;width:132px;height:23px;"></div>
<svg class="a" style="left:211px;top:205px" width="8" height="9" viewBox="0 0 8 9"><path d="M1.6 1.4 L5.6 4.5 L1.6 7.6" fill="none" stroke="#b8b8b8" stroke-width="2"/></svg>
<div class="a fld" style="left:93px;top:227px;width:75px;height:23px;"></div>
<div class="a " style="left:151px;top:229px;width:15px;height:9px;background:#f0f0f0;border:1px solid #d0d0d0"></div>
<div class="a " style="left:151px;top:239px;width:15px;height:9px;background:#f0f0f0;border:1px solid #d0d0d0"></div>
<svg class="a" style="left:155px;top:231px" width="7" height="5" viewBox="0 0 7 5"><path d="M0.5 4 L3.5 1 L6.5 4 Z" fill="#555"/></svg>
<svg class="a" style="left:155px;top:241px" width="7" height="5" viewBox="0 0 7 5"><path d="M0.5 1 L3.5 4 L6.5 1 Z" fill="#555"/></svg>
<div class="a " style="left:93px;top:260px;width:75px;height:22px;background:#fff;border:1px solid #c3c3c3"></div>
<div class="a " style="left:96px;top:263px;width:52px;height:16px;background:#f0f0f0"></div>
<svg class="a" style="left:154px;top:268px" width="10" height="7" viewBox="0 0 10 7"><path d="M1 1 L5 5 L9 1" fill="none" stroke="#a6a6a6" stroke-width="1.1"/></svg>
<div class="a " style="left:18px;top:325px;width:90px;height:119px;background:#f3f3f3;border:1px solid #a9a9a9"></div>
<div class="a cmb" style="left:170px;top:325px;width:81px;height:21px;"></div>
<svg class="a" style="left:237px;top:333px" width="10" height="7" viewBox="0 0 10 7"><path d="M1 1 L5 5 L9 1" fill="none" stroke="#444" stroke-width="1.1"/></svg>
<div class="a cmb" style="left:170px;top:383px;width:81px;height:21px;"></div>
<svg class="a" style="left:237px;top:391px" width="10" height="7" viewBox="0 0 10 7"><path d="M1 1 L5 5 L9 1" fill="none" stroke="#444" stroke-width="1.1"/></svg>
<div class="a cmb" style="left:170px;top:413px;width:81px;height:21px;"></div>
<svg class="a" style="left:237px;top:421px" width="10" height="7" viewBox="0 0 10 7"><path d="M1 1 L5 5 L9 1" fill="none" stroke="#444" stroke-width="1.1"/></svg>
<div class="a btd" style="left:159px;top:352px;width:91px;height:21px;"></div>
<div class="a cb" style="left:27px;top:137px;width:13px;height:13px;"></div>
<div class="a cb" style="left:27px;top:170px;width:13px;height:13px;"></div>
<div class="a cb" style="left:27px;top:202px;width:13px;height:13px;"></div>
<div class="a cb" style="left:27px;top:263px;width:13px;height:13px;"></div>
<div class="a cb" style="left:27px;top:475px;width:13px;height:13px;"></div>
<div class="a cb" style="left:27px;top:498px;width:13px;height:13px;"></div>
<div class="a cb" style="left:27px;top:521px;width:13px;height:13px;"></div>
<div class="a cb" style="left:27px;top:544px;width:13px;height:13px;"></div>
<div class="a cb" style="left:27px;top:567px;width:13px;height:13px;"></div>
<svg class="a" style="left:27px;top:475px" width="13" height="13" viewBox="0 0 13 13"><path d="M2.3 6 L5.3 9.3 L11.3 2.9" fill="none" stroke="#444" stroke-width="1.15"/></svg>
<div class="a rb" style="left:152px;top:475px;width:13px;height:13px;"></div>
<div class="a rb" style="left:152px;top:498px;width:13px;height:13px;"></div>
<div class="a rb" style="left:152px;top:521px;width:13px;height:13px;"></div>
<div class="a rb" style="left:152px;top:544px;width:13px;height:13px;"></div>
<div class="a rb" style="left:152px;top:567px;width:13px;height:13px;"></div>
<div class="a " style="left:155px;top:524px;width:7px;height:7px;background:#222;border-radius:50%"></div>
<div class="a " style="left:273px;top:130px;width:384px;height:454px;background:#fff;border:1px solid #828790"></div>
<div class="a " style="left:431px;top:610px;width:73px;height:21px;background:#e1e1e1;border:2px solid #0078d7"></div>
<div class="a btn" style="left:512px;top:610px;width:73px;height:21px;"></div>
<div class="a btn" style="left:593px;top:610px;width:73px;height:21px;"></div>
<span class="t" style="left:4.96px;top:6px;font-size:12px;color:#fff;transform:scaleX(0.9321)">Edit Event - ID:031</span>
<span class="t" style="left:10.18px;top:36px;font-size:11px;color:#000;transform:scaleX(0.9817)">Name:</span>
<span class="t" style="left:15.95px;top:55px;font-size:11px;color:#000;transform:scaleX(0.9536)">Slope</span>
<span class="t" style="left:17.23px;top:88px;font-size:11px;color:#000;transform:scaleX(0.8341)">1</span>
<span class="t" style="left:26.99px;top:114px;font-size:11px;color:#000;transform:scaleX(0.9636)">Conditions</span>
<span class="t" style="left:42.17px;top:137px;font-size:11px;color:#000;transform:scaleX(0.9945)">Switch</span>
<span class="t" style="left:42.17px;top:170px;font-size:11px;color:#000;transform:scaleX(0.9945)">Switch</span>
<span class="t" style="left:42.56px;top:202px;font-size:11px;color:#000;transform:scaleX(0.9646)">Variable</span>
<span class="t ns" style="left:230.20px;top:136px;font-size:11px;color:#6d6d6d;transform:scaleX(0.9469)">is ON</span>
<span class="t ns" style="left:230.20px;top:169px;font-size:11px;color:#6d6d6d;transform:scaleX(0.9469)">is ON</span>
<span class="t ns" style="left:230.15px;top:201px;font-size:11px;color:#6d6d6d;transform:scaleX(1.0223)">is</span>
<span class="t ns" style="left:173.56px;top:231px;font-size:11px;color:#6d6d6d;transform:scaleX(1.0157)">or above</span>
<span class="t" style="left:42.17px;top:256px;font-size:11px;color:#000;transform:scaleX(0.9899)">Self</span>
<span class="t" style="left:42.17px;top:269px;font-size:11px;color:#000;transform:scaleX(0.9945)">Switch</span>
<span class="t ns" style="left:173.45px;top:263px;font-size:11px;color:#6d6d6d;transform:scaleX(0.9469)">is ON</span>
<span class="t" style="left:17.82px;top:305px;font-size:11px;color:#000;transform:scaleX(0.9553)">Graphic:</span>
<span class="t" style="left:129.08px;top:305px;font-size:11px;color:#000;transform:scaleX(0.9770)">Autonomous Movement</span>
<span class="t" style="left:128.87px;top:328px;font-size:11px;color:#000;transform:scaleX(1.0793)">Type:</span>
<span class="t" style="left:173.15px;top:329px;font-size:11px;color:#000;transform:scaleX(1.0187)">Fixed</span>
<span class="t ns" style="left:168.29px;top:356px;font-size:11px;color:#838383;transform:scaleX(1.0297)">Move Route...</span>
<span class="t" style="left:128.67px;top:387px;font-size:11px;color:#000;transform:scaleX(0.9923)">Speed:</span>
<span class="t" style="left:174.07px;top:387px;font-size:11px;color:#000;transform:scaleX(0.9479)">3: Slow</span>
<span class="t" style="left:128.53px;top:416px;font-size:11px;color:#000;transform:scaleX(1.0415)">Freq:</span>
<span class="t" style="left:174.06px;top:417px;font-size:11px;color:#000;transform:scaleX(0.9668)">3: Low</span>
<span class="t" style="left:26.58px;top:455px;font-size:11px;color:#000;transform:scaleX(0.9796)">Options</span>
<span class="t" style="left:42.08px;top:475px;font-size:11px;color:#000;transform:scaleX(0.9827)">Move Animation</span>
<span class="t" style="left:42.17px;top:498px;font-size:11px;color:#000;transform:scaleX(0.9891)">Stop Animation</span>
<span class="t" style="left:42.08px;top:521px;font-size:11px;color:#000;transform:scaleX(0.9835)">Direction Fix</span>
<span class="t" style="left:42.92px;top:544px;font-size:11px;color:#000;transform:scaleX(0.9804)">Through</span>
<span class="t" style="left:43.08px;top:566px;font-size:11px;color:#000;transform:scaleX(0.9868)">Always on Top</span>
<span class="t" style="left:151.92px;top:455px;font-size:11px;color:#000;transform:scaleX(0.9777)">Trigger</span>
<span class="t" style="left:167.57px;top:475px;font-size:11px;color:#000;transform:scaleX(1.0026)">Action Button</span>
<span class="t" style="left:167.07px;top:498px;font-size:11px;color:#000;transform:scaleX(0.9987)">Player Touch</span>
<span class="t" style="left:167.06px;top:521px;font-size:11px;color:#000;transform:scaleX(1.0114)">Event Touch</span>
<span class="t" style="left:167.56px;top:544px;font-size:11px;color:#000;transform:scaleX(1.0362)">Autorun</span>
<span class="t" style="left:167.12px;top:566px;font-size:11px;color:#000;transform:scaleX(0.9410)">Parallel Process</span>
<span class="t" style="left:272.09px;top:114px;font-size:11px;color:#000;transform:scaleX(0.9780)">List of Event Commands:</span>
<span class="t" style="left:276.54px;top:133px;font-size:11px;color:#000;transform:scaleX(1.0351)">@&gt;</span>
<span class="t" style="left:276.54px;top:148px;font-size:11px;color:#000;transform:scaleX(1.0351)">@&gt;</span>
<span class="t" style="left:276.54px;top:163px;font-size:11px;color:#000;transform:scaleX(1.0351)">@&gt;</span>
<span class="t" style="left:276.54px;top:178px;font-size:11px;color:#000;transform:scaleX(1.0351)">@&gt;</span>
<span class="t" style="left:294.47px;top:133px;font-size:11px;color:#008000;transform:scaleX(0.9912)">Comment: Slope: -3x1</span>
<span class="t" style="left:294.46px;top:148px;font-size:11px;color:#008000;transform:scaleX(1.0076)">Comment: Width: 0/2</span>
<span class="t" style="left:294.46px;top:163px;font-size:11px;color:#008000;transform:scaleX(1.0122)">Comment: Offset: 16px</span>
<span class="t" style="left:196.37px;top:44px;font-size:11px;color:#000;transform:scaleX(0.9972)">New</span>
<span class="t" style="left:179.44px;top:57px;font-size:11px;color:#000;transform:scaleX(0.9795)">Event Page</span>
<span class="t" style="left:281.48px;top:44px;font-size:11px;color:#000;transform:scaleX(0.9859)">Copy</span>
<span class="t" style="left:266.44px;top:57px;font-size:11px;color:#000;transform:scaleX(0.9795)">Event Page</span>
<span class="t ns" style="left:366.75px;top:44px;font-size:11px;color:#838383;transform:scaleX(1.0185)">Paste</span>
<span class="t ns" style="left:353.44px;top:57px;font-size:11px;color:#838383;transform:scaleX(0.9795)">Event Page</span>
<span class="t ns" style="left:451.96px;top:44px;font-size:11px;color:#838383;transform:scaleX(1.0133)">Delete</span>
<span class="t ns" style="left:440.44px;top:57px;font-size:11px;color:#838383;transform:scaleX(0.9795)">Event Page</span>
<span class="t" style="left:542.51px;top:44px;font-size:11px;color:#000;transform:scaleX(1.0079)">Clear</span>
<span class="t" style="left:527.44px;top:57px;font-size:11px;color:#000;transform:scaleX(0.9795)">Event Page</span>
<span class="t" style="left:459.24px;top:614px;font-size:11px;color:#000;transform:scaleX(0.9714)">OK</span>
<span class="t" style="left:531.19px;top:614px;font-size:11px;color:#000;transform:scaleX(0.9608)">Cancel</span>
<span class="t" style="left:616.08px;top:614px;font-size:11px;color:#000;transform:scaleX(0.9683)">Apply</span>
</body></html>
